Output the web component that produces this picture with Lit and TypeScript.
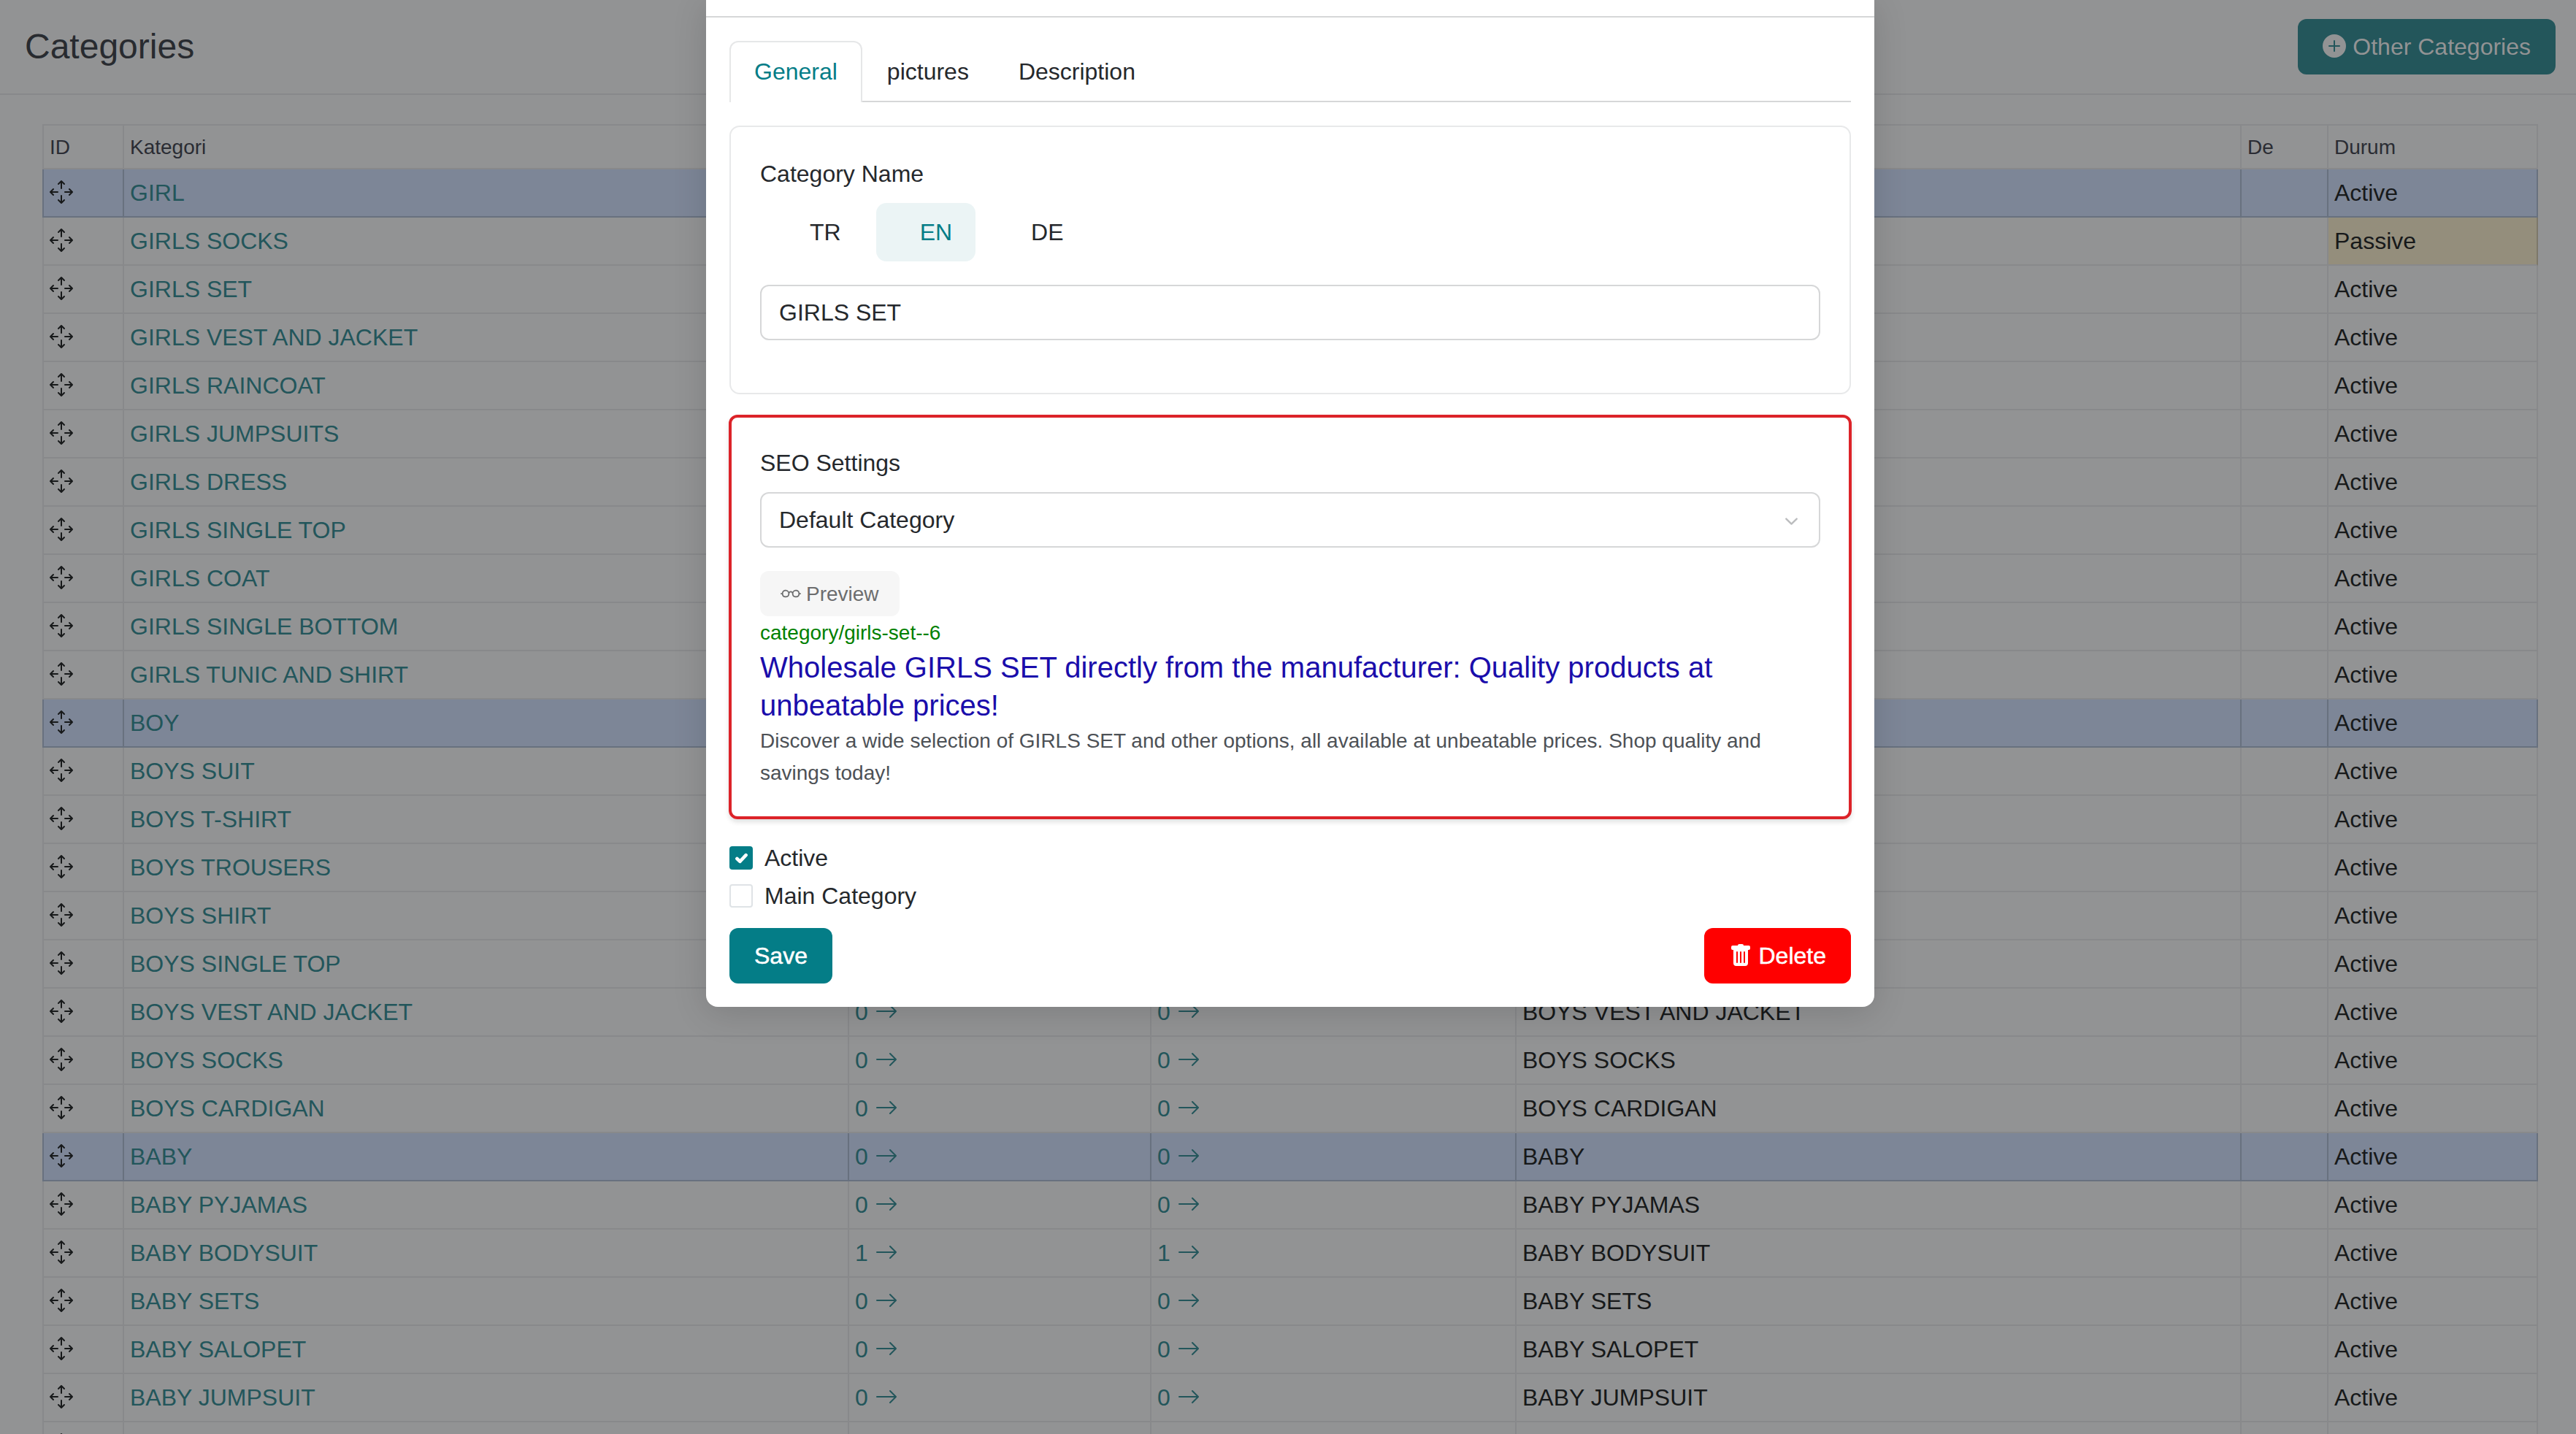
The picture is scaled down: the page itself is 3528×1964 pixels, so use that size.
import { LitElement, html, css, svg, nothing } from "lit";
import { customElement, property } from "lit/decorators.js";
import { classMap } from "lit/directives/class-map.js";

interface Category {
  name: string;
  count?: number;
  main?: boolean;
  passive?: boolean;
}

const CATEGORIES: Category[] = [
  { name: "GIRL", main: true },
  { name: "GIRLS SOCKS", passive: true },
  { name: "GIRLS SET" },
  { name: "GIRLS VEST AND JACKET" },
  { name: "GIRLS RAINCOAT" },
  { name: "GIRLS JUMPSUITS" },
  { name: "GIRLS DRESS" },
  { name: "GIRLS SINGLE TOP" },
  { name: "GIRLS COAT" },
  { name: "GIRLS SINGLE BOTTOM" },
  { name: "GIRLS TUNIC AND SHIRT" },
  { name: "BOY", main: true },
  { name: "BOYS SUIT" },
  { name: "BOYS T-SHIRT" },
  { name: "BOYS TROUSERS" },
  { name: "BOYS SHIRT" },
  { name: "BOYS SINGLE TOP" },
  { name: "BOYS VEST AND JACKET", count: 0 },
  { name: "BOYS SOCKS", count: 0 },
  { name: "BOYS CARDIGAN", count: 0 },
  { name: "BABY", main: true, count: 0 },
  { name: "BABY PYJAMAS", count: 0 },
  { name: "BABY BODYSUIT", count: 1 },
  { name: "BABY SETS", count: 0 },
  { name: "BABY SALOPET", count: 0 },
  { name: "BABY JUMPSUIT", count: 0 },
  { name: "" },
];

const ICONS = {
  move: svg`<path d="M7.646.146a.5.5 0 0 1 .708 0l2 2a.5.5 0 0 1-.708.708L8.5 1.707V5.5a.5.5 0 0 1-1 0V1.707L6.354 2.854a.5.5 0 1 1-.708-.708zM8 10a.5.5 0 0 1 .5.5v3.793l1.146-1.147a.5.5 0 0 1 .708.708l-2 2a.5.5 0 0 1-.708 0l-2-2a.5.5 0 0 1 .708-.708L7.5 14.293V10.5A.5.5 0 0 1 8 10M.146 8.354a.5.5 0 0 1 0-.708l2-2a.5.5 0 1 1 .708.708L1.707 7.5H5.5a.5.5 0 0 1 0 1H1.707l1.147 1.146a.5.5 0 0 1-.708.708zM10 8a.5.5 0 0 1 .5-.5h3.793l-1.147-1.146a.5.5 0 0 1 .708-.708l2 2a.5.5 0 0 1 0 .708l-2 2a.5.5 0 0 1-.708-.708L14.293 8.5H10.5A.5.5 0 0 1 10 8"/>`,
  arrow: svg`<path d="M1 8a.5.5 0 0 1 .5-.5h11.793l-3.147-3.146a.5.5 0 0 1 .708-.708l4 4a.5.5 0 0 1 0 .708l-4 4a.5.5 0 0 1-.708-.708L13.293 8.5H1.5A.5.5 0 0 1 1 8"/>`,
  plus: svg`<path d="M16 8A8 8 0 1 1 0 8a8 8 0 0 1 16 0M8.5 4.5a.5.5 0 0 0-1 0v3h-3a.5.5 0 0 0 0 1h3v3a.5.5 0 0 0 1 0v-3h3a.5.5 0 0 0 0-1h-3z"/>`,
  glasses: svg`<path d="M4 6a2 2 0 1 1 0 4 2 2 0 0 1 0-4m2.625.547a3 3 0 0 0-5.584.953H.5a.5.5 0 0 0 0 1h.541A3 3 0 0 0 7 8a1 1 0 0 1 2 0 3 3 0 0 0 5.959.5h.541a.5.5 0 0 0 0-1h-.541a3 3 0 0 0-5.584-.953A2 2 0 0 0 8 6c-.532 0-1.016.208-1.375.547M14 8a2 2 0 1 1-4 0 2 2 0 0 1 4 0"/>`,
  trash: svg`<path d="M2.5 1a1 1 0 0 0-1 1v1a1 1 0 0 0 1 1H3v9a2 2 0 0 0 2 2h6a2 2 0 0 0 2-2V4h.5a1 1 0 0 0 1-1V2a1 1 0 0 0-1-1H10a1 1 0 0 0-1-1H7a1 1 0 0 0-1 1zm3 4a.5.5 0 0 1 .5.5v7a.5.5 0 0 1-1 0v-7a.5.5 0 0 1 .5-.5M8 5a.5.5 0 0 1 .5.5v7a.5.5 0 0 1-1 0v-7A.5.5 0 0 1 8 5m3 .5v7a.5.5 0 0 1-1 0v-7a.5.5 0 0 1 1 0"/>`,
  chevron: svg`<path d="M4.65 6.3 8.25 9.8 11.85 6.3" fill="none" stroke="currentColor" stroke-width="1.2" stroke-linecap="round" stroke-linejoin="round"/>`,
  check: svg`<path d="M5.2 8.5 7.2 10.4 11.3 6.1" fill="none" stroke="currentColor" stroke-width="2.3" stroke-linecap="round" stroke-linejoin="round"/>`,
};

@customElement("x-icon")
export class IconElement extends LitElement {
  @property() name: keyof typeof ICONS = "move";

  render() {
    return html`<svg viewBox="0 0 16 16" fill="currentColor">${ICONS[this.name]}</svg>`;
  }

  static styles = css`
    :host {
      display: block;
      flex: none;
      width: 32px;
      height: 32px;
    }

    svg {
      display: block;
      width: 100%;
      height: 100%;
      overflow: visible;
    }
  `;
}

@customElement("category-table")
export class CategoryTable extends LitElement {
  render() {
    return html`
      <div class="table">
        <div class="row head">
          <div class="cell">ID</div>
          <div class="cell">Kategori</div>
          <div class="cell"></div>
          <div class="cell"></div>
          <div class="cell"></div>
          <div class="cell">De</div>
          <div class="cell">Durum</div>
        </div>
        ${CATEGORIES.map((c) => this.row(c))}
      </div>
    `;
  }

  private row(c: Category) {
    return html`
      <div class=${classMap({ row: true, main: !!c.main })}>
        <div class="cell"><x-icon name="move"></x-icon></div>
        <div class="cell link">${c.name}</div>
        <div class="cell link">${this.count(c)}</div>
        <div class="cell link">${this.count(c)}</div>
        <div class="cell">${c.count === undefined ? nothing : c.name}</div>
        <div class="cell"></div>
        <div class=${classMap({ cell: true, passive: !!c.passive })}>${this.status(c)}</div>
      </div>
    `;
  }

  private count(c: Category) {
    return c.count === undefined ? nothing : html`${c.count}<x-icon name="arrow"></x-icon>`;
  }

  private status(c: Category) {
    if (!c.name) return nothing;
    return c.passive ? "Passive" : "Active";
  }

  static styles = css`
    :host {
      display: block;
    }

    .table {
      border-top: 2px solid #88898b;
      border-left: 2px solid #88898b;
    }

    .row {
      display: grid;
      grid-template-columns: 110px 993px 414px 500px 993px 119px 1fr;
      height: 66px;
    }

    .cell {
      display: flex;
      align-items: center;
      gap: 9px;
      padding-left: 8px;
      border-right: 2px solid #88898b;
      border-bottom: 2px solid #88898b;
      white-space: nowrap;
    }

    .head {
      height: 60px;
      font-size: 28px;
      color: #2a2c33;
    }

    .head .cell {
      padding-top: 2px;
    }

    .link {
      color: #23565b;
    }

    .main {
      margin-left: -2px;
      grid-template-columns: 112px 993px 414px 500px 993px 119px 1fr;
    }

    .main .cell {
      background: #7d8697;
      border-color: #68717f;
    }

    .main .cell:first-child {
      border-left: 2px solid #68717f;
    }

    .passive {
      background: #948e7c;
      border-right-color: #7d786a;
    }

    x-icon {
      margin-top: -2px;
    }
  `;
}

@customElement("category-modal")
export class CategoryModal extends LitElement {
  render() {
    return html`
      <div class="modal">
        <div class="modal-header"></div>
        <div class="modal-body">
          <div class="tabs">
            <div class="tab active">General</div>
            <div class="tab">pictures</div>
            <div class="tab">Description</div>
          </div>

          <div class="card">
            <div class="label">Category Name</div>
            <div class="langs">
              ${["TR", "EN", "DE"].map((l) => html`
                <div class=${classMap({ lang: true, active: l === "EN" })}>${l}</div>
              `)}
            </div>
            <div class="field name">GIRLS SET</div>
          </div>

          <div class="card seo">
            <div class="label">SEO Settings</div>
            <div class="field">Default Category<x-icon name="chevron"></x-icon></div>
            <div class="preview"><x-icon name="glasses"></x-icon>Preview</div>
            <div class="url">category/girls-set--6</div>
            <div class="title">Wholesale GIRLS SET directly from the manufacturer: Quality products at<br>unbeatable prices!</div>
            <div class="desc">Discover a wide selection of GIRLS SET and other options, all available at unbeatable prices. Shop quality and<br>savings today!</div>
          </div>

          <div class="checks">
            ${this.check("Active", true)}
            ${this.check("Main Category", false)}
          </div>

          <div class="footer">
            <div class="button save">Save</div>
            <div class="button delete"><x-icon name="trash"></x-icon>Delete</div>
          </div>
        </div>
      </div>
    `;
  }

  private check(label: string, checked: boolean) {
    return html`
      <div class="check">
        <div class=${classMap({ box: true, checked })}>
          ${checked ? html`<x-icon name="check"></x-icon>` : nothing}
        </div>
        ${label}
      </div>
    `;
  }

  static styles = css`
    :host {
      display: block;
    }

    .modal {
      width: 1600px;
      height: 1379px;
      background: #fff;
      border-radius: 0 0 16px 16px;
      box-shadow: 0 8px 48px rgba(0, 0, 0, .14);
      color: #25282c;
      line-height: 48px;
      white-space: nowrap;
    }

    .modal-header {
      box-sizing: border-box;
      height: 24px;
      border-bottom: 2px solid #d6d7d8;
    }

    .modal-body {
      padding: 32px;
    }

    .tabs {
      display: flex;
      box-sizing: border-box;
      height: 84px;
      border-bottom: 2px solid #d6d7d8;
    }

    .tab {
      box-sizing: border-box;
      height: 84px;
      padding: 16px 32px;
      border: 2px solid transparent;
      border-bottom: none;
      border-radius: 12px 12px 0 0;
    }

    .tab.active {
      background: #fff;
      border-color: #e6e7e8;
      color: #047d87;
    }

    .card {
      margin-top: 32px;
      padding: 40px;
      border: 2px solid #e8e9ea;
      border-radius: 14px;
    }

    .langs {
      display: flex;
      gap: 16px;
      margin: 16px 0 32px 8px;
    }

    .lang {
      padding: 16px 32px 16px 60px;
      border-radius: 14px;
    }

    .lang.active {
      background: #ebf4f5;
      color: #047d87;
    }

    .field {
      display: flex;
      box-sizing: border-box;
      align-items: center;
      justify-content: space-between;
      height: 76px;
      padding: 0 22px 0 24px;
      border: 2px solid #d6d7d8;
      border-radius: 12px;
    }

    .field x-icon {
      color: #bbbcbe;
      margin-top: 4px;
    }

    .field.name {
      margin-bottom: 32px;
    }

    .seo {
      margin: 28px -1px 0;
      padding: 38px 39px;
      border: 4px solid #dc2329;
      border-radius: 12px;
      box-shadow: 0 4px 6px rgba(0, 0, 0, .12);
    }

    .seo .label {
      margin-bottom: 16px;
    }

    .preview {
      display: flex;
      box-sizing: border-box;
      align-items: center;
      gap: 7px;
      width: fit-content;
      height: 62px;
      margin-top: 32px;
      padding: 2px 28px 0;
      border-radius: 12px;
      background: #f6f6f6;
      color: #6c6d6e;
      font-size: 28px;
    }

    .preview x-icon {
      width: 28px;
      height: 28px;
      margin-top: -2px;
    }

    .url {
      padding-top: 1px;
      font-size: 28px;
      line-height: 44px;
      color: #008000;
    }

    .title {
      margin-top: -1px;
      font-size: 40px;
      line-height: 52px;
      color: #1a0dab;
    }

    .desc {
      padding-top: 1px;
      margin-bottom: -1px;
      font-size: 28px;
      line-height: 44px;
      color: #4d5156;
    }

    .checks {
      display: flex;
      flex-direction: column;
      gap: 4px;
      margin-top: 29px;
    }

    .check {
      display: flex;
      align-items: center;
      gap: 16px;
    }

    .box {
      box-sizing: border-box;
      width: 32px;
      height: 32px;
      border: 2px solid #dfe3e6;
      border-radius: 4px;
    }

    .box.checked {
      border: none;
      background: #047d87;
      color: #fff;
    }

    .footer {
      display: flex;
      justify-content: space-between;
      margin-top: 20px;
    }

    .button {
      display: flex;
      align-items: center;
      height: 76px;
      padding: 0 34px;
      border-radius: 12px;
      color: #fff;
      -webkit-text-stroke: .5px;
    }

    .save {
      background: #047d87;
    }

    .delete {
      gap: 9px;
      background: #f00;
    }
  `;
}

@customElement("app-root")
export class AppRoot extends LitElement {
  render() {
    return html`
      <div class="page">
        <div class="header">
          <div class="heading">Categories</div>
          <div class="button"><x-icon name="plus"></x-icon>Other Categories</div>
        </div>
        <category-table></category-table>
      </div>
      <category-modal></category-modal>
    `;
  }

  static styles = css`
    :host {
      display: block;
      position: relative;
      width: 3528px;
      height: 1964px;
      overflow: hidden;
      background: #929394;
      color: #17191a;
      font-family: "Liberation Sans", Arial, sans-serif;
      font-size: 32px;
    }

    .header {
      display: flex;
      box-sizing: border-box;
      align-items: center;
      justify-content: space-between;
      height: 130px;
      padding: 0 28px 0 34px;
      border-bottom: 2px solid #88898b;
    }

    .heading {
      margin-bottom: 2px;
      font-size: 48px;
      color: #282b30;
    }

    .button {
      display: flex;
      align-items: center;
      gap: 9px;
      height: 76px;
      padding: 0 34px;
      border-radius: 12px;
      background: #23565b;
      color: #929394;
    }

    .button x-icon {
      margin-top: -2px;
    }

    category-table {
      margin: 40px 52px 0 58px;
    }

    category-modal {
      position: absolute;
      top: 0;
      left: 967px;
    }
  `;
}
